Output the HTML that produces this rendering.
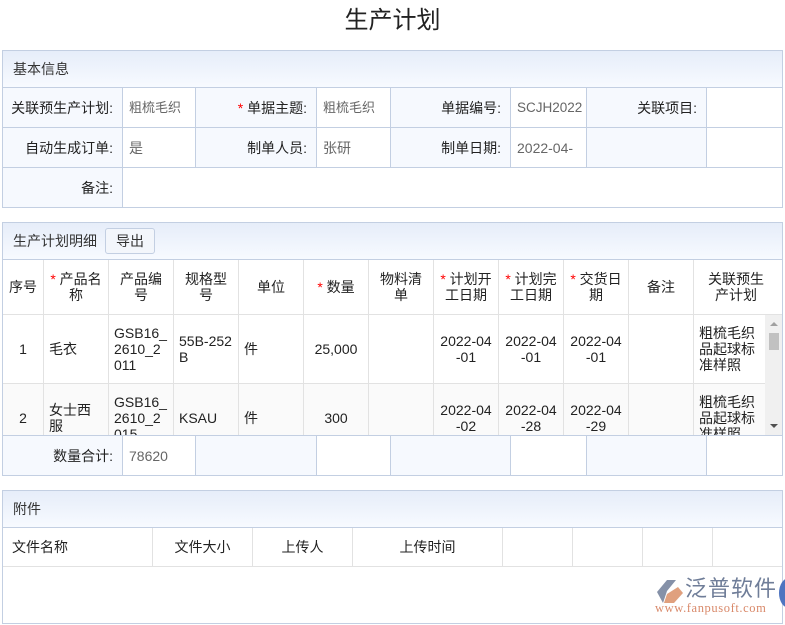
<!DOCTYPE html>
<html><head><meta charset="utf-8">
<style>
*{margin:0;padding:0;box-sizing:border-box}
body{width:785px;height:625px;background:#fff;position:relative;overflow:hidden;font-family:"Liberation Sans","Noto Sans CJK SC",sans-serif;font-size:14px;color:#333}
.a{position:absolute}
.c{position:absolute;display:flex;align-items:center;line-height:16px}
.p{position:absolute;border:1px solid #c3cfe2}
.hd{position:absolute;left:0;top:0;right:0;height:37px;background:linear-gradient(#e6edf9,#f7faff);border-bottom:1px solid #c3cfe2;display:flex;align-items:center;padding-left:10px;color:#333}
.l{background:#f6f9fe;justify-content:flex-end;padding-right:9px;border-right:1px solid #c3cfe2;border-bottom:1px solid #c3cfe2;color:#222}
.v{background:#fff;padding-left:6px;color:#666;border-right:1px solid #c3cfe2;border-bottom:1px solid #c3cfe2;font-size:13px}
.g{border-right:1px solid #e2e2e2;border-bottom:1px solid #e2e2e2;text-align:center;justify-content:center;color:#222;padding:0 5px;font-size:14px}
.s{color:#f00}
.tl{justify-content:flex-start;text-align:left}
</style></head><body>
<div class="a" style="left:0;width:785px;top:0px;text-align:center;font-size:24px;color:#222">生产计划</div>

<!-- panel 1 -->
<div class="p" style="left:2px;top:50px;width:781px;height:158px">
<div class="hd">基本信息</div>
</div>
<div class="c l" style="left:3px;top:88px;width:120px;height:40px">关联预生产计划:</div>
<div class="c v" style="left:123px;top:88px;width:73px;height:40px">粗梳毛织</div>
<div class="c l" style="left:196px;top:88px;width:121px;height:40px"><span class="s">*&nbsp;</span>单据主题:</div>
<div class="c v" style="left:317px;top:88px;width:74px;height:40px">粗梳毛织</div>
<div class="c l" style="left:391px;top:88px;width:120px;height:40px">单据编号:</div>
<div class="c v" style="left:511px;top:88px;width:76px;height:40px;font-size:13.5px">SCJH2022</div>
<div class="c l" style="left:587px;top:88px;width:120px;height:40px">关联项目:</div>
<div class="c v" style="left:707px;top:88px;width:75px;height:40px;border-right:0"></div>
<div class="c l" style="left:3px;top:128px;width:120px;height:40px">自动生成订单:</div>
<div class="c v" style="left:123px;top:128px;width:73px;height:40px;font-size:14px">是</div>
<div class="c l" style="left:196px;top:128px;width:121px;height:40px">制单人员:</div>
<div class="c v" style="left:317px;top:128px;width:74px;height:40px;font-size:14px">张研</div>
<div class="c l" style="left:391px;top:128px;width:120px;height:40px">制单日期:</div>
<div class="c v" style="left:511px;top:128px;width:76px;height:40px;font-size:14px">2022-04-</div>
<div class="c l" style="left:587px;top:128px;width:120px;height:40px;background:#f6f9fe"></div>
<div class="c v" style="left:707px;top:128px;width:75px;height:40px;border-right:0"></div>
<div class="c l" style="left:3px;top:168px;width:120px;height:39px;border-bottom:0">备注:</div>

<!-- panel 2 -->
<div class="p" style="left:2px;top:222px;width:781px;height:254px;overflow:hidden">
<div class="hd">生产计划明细<span style="margin-left:8px;border:1px solid #c3cfe2;border-radius:3px;background:#f3f6fb;padding:4px 10px;line-height:16px">导出</span></div>
</div>
<div class="a" style="left:3px;top:260px;width:779px;height:175px;overflow:hidden;background:#fff">
<div class="c g" style="left:0;top:0;width:41px;height:55px;padding:0 2px">序号</div>
<div class="c g" style="left:41px;top:0;width:65px;height:55px"><span><span class="s">*</span> 产品名称</span></div>
<div class="c g" style="left:106px;top:0;width:65px;height:55px">产品编号</div>
<div class="c g" style="left:171px;top:0;width:65px;height:55px">规格型号</div>
<div class="c g" style="left:236px;top:0;width:65px;height:55px">单位</div>
<div class="c g" style="left:301px;top:0;width:65px;height:55px"><span><span class="s">*</span> 数量</span></div>
<div class="c g" style="left:366px;top:0;width:65px;height:55px">物料清单</div>
<div class="c g" style="left:431px;top:0;width:65px;height:55px"><span><span class="s">*</span> 计划开工日期</span></div>
<div class="c g" style="left:496px;top:0;width:65px;height:55px"><span><span class="s">*</span> 计划完工日期</span></div>
<div class="c g" style="left:561px;top:0;width:65px;height:55px"><span><span class="s">*</span> 交货日期</span></div>
<div class="c g" style="left:626px;top:0;width:65px;height:55px">备注</div>
<div class="c g" style="left:691px;top:0;width:88px;height:55px;border-right:0;padding:0 14px 0 10px">关联预生产计划</div>

<div class="c g" style="left:0;top:55px;width:41px;height:69px">1</div>
<div class="c g tl" style="left:41px;top:55px;width:65px;height:69px">毛衣</div>
<div class="c g tl" style="left:106px;top:55px;width:65px;height:69px;word-break:break-all">GSB16_2610_2011</div>
<div class="c g tl" style="left:171px;top:55px;width:65px;height:69px;word-break:break-all">55B-252B</div>
<div class="c g tl" style="left:236px;top:55px;width:65px;height:69px">件</div>
<div class="c g" style="left:301px;top:55px;width:65px;height:69px">25,000</div>
<div class="c g" style="left:366px;top:55px;width:65px;height:69px"></div>
<div class="c g" style="left:431px;top:55px;width:65px;height:69px">2022-04<br>-01</div>
<div class="c g" style="left:496px;top:55px;width:65px;height:69px">2022-04<br>-01</div>
<div class="c g" style="left:561px;top:55px;width:65px;height:69px">2022-04<br>-01</div>
<div class="c g" style="left:626px;top:55px;width:65px;height:69px"></div>
<div class="c g tl" style="left:691px;top:55px;width:71px;height:69px;border-right:0;padding-left:5px">粗梳毛织品起球标准样照</div>

<div class="a" style="left:0;top:124px;width:762px;height:60px;background:#fafafa"></div>
<div class="c g" style="left:0;top:124px;width:41px;height:69px">2</div>
<div class="c g tl" style="left:41px;top:124px;width:65px;height:69px">女士西服</div>
<div class="c g tl" style="left:106px;top:124px;width:65px;height:69px;word-break:break-all;align-items:flex-start;padding-top:10px">GSB16_2610_2015</div>
<div class="c g tl" style="left:171px;top:124px;width:65px;height:69px">KSAU</div>
<div class="c g tl" style="left:236px;top:124px;width:65px;height:69px">件</div>
<div class="c g" style="left:301px;top:124px;width:65px;height:69px">300</div>
<div class="c g" style="left:366px;top:124px;width:65px;height:69px"></div>
<div class="c g" style="left:431px;top:124px;width:65px;height:69px">2022-04<br>-02</div>
<div class="c g" style="left:496px;top:124px;width:65px;height:69px">2022-04<br>-28</div>
<div class="c g" style="left:561px;top:124px;width:65px;height:69px">2022-04<br>-29</div>
<div class="c g" style="left:626px;top:124px;width:65px;height:69px"></div>
<div class="c g tl" style="left:691px;top:124px;width:71px;height:69px;border-right:0;padding-left:5px;align-items:flex-start;padding-top:10px">粗梳毛织品起球标准样照</div>
<!-- scrollbar -->
<div class="a" style="left:762px;top:55px;width:17px;height:120px;background:#f0f0f0"></div>
<div class="a" style="left:766px;top:73px;width:10px;height:17px;background:#c1c1c1"></div>
<div class="a" style="left:767px;top:62px;width:0;height:0;border-left:4px solid transparent;border-right:4px solid transparent;border-bottom:4px solid #a0a0a0"></div>
<div class="a" style="left:767px;top:164px;width:0;height:0;border-left:4px solid transparent;border-right:4px solid transparent;border-top:4px solid #505050"></div>
</div>
<div class="a" style="left:3px;top:435px;width:779px;height:1px;background:#c3cfe2"></div>
<div class="c l" style="left:3px;top:436px;width:120px;height:39px;border-bottom:0">数量合计:</div>
<div class="c v" style="left:123px;top:436px;width:73px;height:39px;border-bottom:0;font-size:14px">78620</div>
<div class="c l" style="left:196px;top:436px;width:121px;height:39px;border-bottom:0"></div>
<div class="c v" style="left:317px;top:436px;width:74px;height:39px;border-bottom:0"></div>
<div class="c l" style="left:391px;top:436px;width:120px;height:39px;border-bottom:0"></div>
<div class="c v" style="left:511px;top:436px;width:76px;height:39px;border-bottom:0"></div>
<div class="c l" style="left:587px;top:436px;width:120px;height:39px;border-bottom:0"></div>

<!-- panel 3 -->
<div class="p" style="left:2px;top:490px;width:781px;height:134px">
<div class="hd">附件</div>
</div>
<div class="c g tl" style="left:3px;top:528px;width:150px;height:39px;padding-left:9px">文件名称</div>
<div class="c g" style="left:153px;top:528px;width:100px;height:39px">文件大小</div>
<div class="c g" style="left:253px;top:528px;width:100px;height:39px">上传人</div>
<div class="c g" style="left:353px;top:528px;width:150px;height:39px">上传时间</div>
<div class="c g" style="left:503px;top:528px;width:70px;height:39px"></div>
<div class="c g" style="left:573px;top:528px;width:70px;height:39px"></div>
<div class="c g" style="left:643px;top:528px;width:70px;height:39px"></div>
<div class="c g" style="left:713px;top:528px;width:69px;height:39px;border-right:0"></div>

<!-- logo -->
<svg class="a" style="left:654px;top:578px" width="32" height="28" viewBox="0 0 32 28">
<path d="M3 14 L13 2 L22 2 L13 13 L9 25 Z" fill="#8591a8"/>
<path d="M13 16 L24 9 L29 15 L20 25 L10 25 Z" fill="#e0a07e"/>
</svg>
<div class="a" style="left:685px;top:575px;font-size:22px;color:#6f7d98;letter-spacing:1px;line-height:28px">泛普软件</div>
<div class="a" style="left:655px;top:601px;font-family:'Liberation Serif',serif;font-size:12.5px;color:#d9896a;letter-spacing:0.6px">www.fanpusoft.com</div>
<div class="a" style="left:779px;top:578px;width:20px;height:30px;border-radius:50%;background:#4e74c0"></div>
</body></html>
